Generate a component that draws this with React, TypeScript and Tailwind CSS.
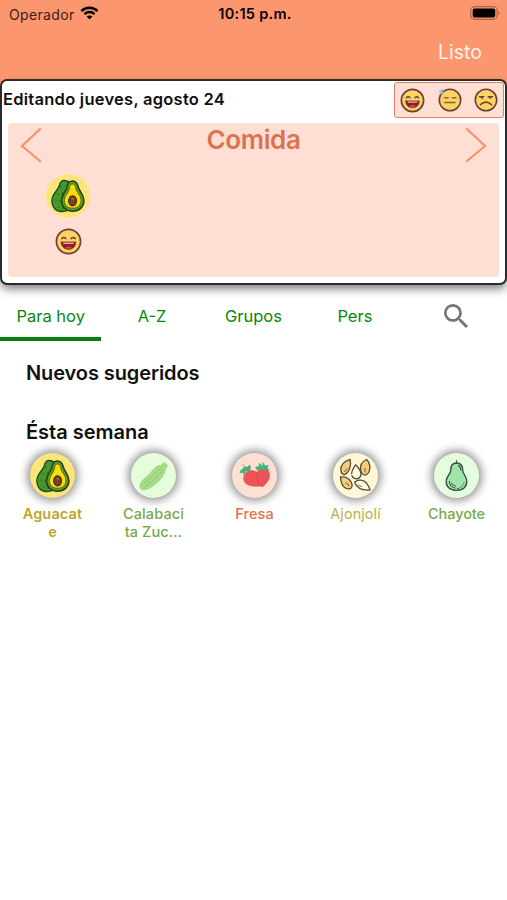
import React, { useState } from 'react'

type Mood = 'happy' | 'neutral' | 'sad'

const Face: React.FC<{ mood: Mood; className?: string }> = ({ mood, className }) => {
  return (
    <svg viewBox="0 0 26 26" className={className} fill="none" strokeLinecap="round">
      <circle cx="13" cy="13" r="11.6" fill="#fdd264" stroke="#6b4136" strokeWidth="1.7" />
      {mood === 'happy' && (
        <>
          <path d="M6.6 10.2q1.9-2.2 3.8 0M15.6 10.2q1.9-2.2 3.8 0" stroke="#6b4136" strokeWidth="1.5" />
          <path d="M6 13.5h14c0 4.3-3 7-7 7s-7-2.7-7-7z" fill="#8f1f22" stroke="#6b302c" strokeWidth=".8" />
          <path d="M8 14.1h10v1.1H8z" fill="#f5d5c6" />
          <path d="M9.6 19q3.4-2.5 6.8 0-3.4 2-6.8 0z" fill="#e8403f" />
        </>
      )}
      {mood === 'neutral' && (
        <>
          <path d="M7 10.5h4M15.5 10.5h4M7.5 15.8h11" stroke="#8a623c" strokeWidth="1.6" />
          <path d="M2 3.5l3.2 1.6M4.300 2l.4 4M2.300 6.200l2.400-1" stroke="#b3a6e4" strokeWidth="1.800" />
        </>
      )}
      {mood === 'sad' && (
        <>
          <path d="M6 9.600h4.600M15.400 9.600H20M7 18q6-5.400 12 0" stroke="#6b4136" strokeWidth="1.6" />
          <path d="M8.6 10v1.3M17.4 10v1.3" stroke="#6b4136" strokeWidth="1.5" />
        </>
      )}
    </svg>
  )
}

const Avocado: React.FC = () => (
  <svg viewBox="0 0 34 34" className="size-[34px]" strokeLinejoin="round">
    <path
      d="M13 1.5c-3 0-4 2.2-4.6 5C7.6 10.5 3 13 1.4 18.5c-2 7 1.800 13.800 9.100 14 4 .1 8-1 9.500-4V5c-1.600-2-4-3.500-7-3.500z"
      fill="#43992b"
      stroke="#21491d"
      strokeWidth="1.3"
    />
    <path d="M10 8l.1.1M7 15l.1.1M11 14l.1.1M5 21l.1.1M9 22l.1.1M8 28l.1.1M12 29l.1.1" stroke="#21491d" strokeWidth="1.1" strokeLinecap="round" />
    <path
      d="M21.500 2c-3.300 0-5 2.500-5.500 6-.6 4-5 7-5.500 13-.5 6.500 4.500 11.200 11.200 11.200 6.600 0 11.400-4.600 11.200-11-.2-6-4.600-9-5.600-13.200-.8-3.500-2.500-6-5.800-6z"
      fill="#559c2b"
      stroke="#2c3b18"
      strokeWidth="1.5"
    />
    <path
      d="M21.500 5c-2 0-2.800 2-3.200 5-.6 4.200-4.900 6.500-4.900 11.500 0 5 3.600 7.700 8.300 7.700s8.300-3 8.300-8c0-5-4.300-7.300-5.200-11.500-.7-3-1.300-4.700-3.300-4.700z"
      fill="#ffdc05"
      stroke="#526416"
      strokeWidth=".8"
    />
    <ellipse cx="21.6" cy="21.8" rx="3.900" ry="5" fill="#754123" stroke="#3f2a14" strokeWidth="1.2" />
    <path d="M20.500 19.500q1.600-.6 2 1.500" fill="none" stroke="#b77a4b" strokeWidth="1.1" />
  </svg>
)

const Zucchini: React.FC = () => (
  <svg viewBox="0 0 34 34" className="size-[32px]" fill="none" strokeLinecap="round">
    <path
      d="M25.500 5.500l1.800-2.800 3.700 2.600-.5 2.700-2 .5c1.400 3-1 7.500-4.800 12C18.500 26.500 10 32.500 5 31.500c-4-.8-3.500-5.500-.8-9C7.500 18 10.500 17.500 14 13c3-3.900 6.500-8 11.500-7.500z"
      fill="#a5dc88"
      stroke="#8fcb75"
      strokeWidth=".7"
    />
    <path d="M25 8.500C18 11 16 19 6 24.500M26.500 11C21 17 15.500 24 6.500 28.500" stroke="#88c56e" strokeWidth=".8" strokeDasharray="5 1.5" />
    <path d="M22 8.500q-4 3-7 7" stroke="#b5e39a" strokeWidth=".9" />
  </svg>
)

const Strawberry: React.FC = () => (
  <svg viewBox="0 0 34 34" className="size-[34px]">
    <path d="M10 12c4-1.500 7 0 9 1 3-5 11-5 12.500.5 1.500 5-1.500 10.500-6.500 14-1 .8-2 .6-3-.3-5.500 1-13 .3-16-4.700C4 18.500 6.500 13.500 10 12z" fill="#eb5354" />
    <path d="M19 12.500q-1.500 8 3 14.500" fill="none" stroke="#d64549" strokeWidth=".7" />
    <path d="M2.500 11.500l3-2.500-.5-2.500 4 1.500 3-2.500 1 4-1.500 2.500-4 .5-1.500 4-1.500-3-3 1zM17 8l4-1-.5-3 3.500 2 1.500-2.500 1.500 3 3.500-.5-1 3 2 1.500-4.500 1-4-1.500-4 1.500z" fill="#42b17c" />
    <path d="M6 8.500l-1-3M24 7V3" stroke="#94d9a8" strokeWidth="1.3" strokeLinecap="round" />
    <path d="M11 16l.1.6M16 18l.1.6M12 22l.1.6M24 14l.1.6M27 18l.1.6M23 21l.1.6" stroke="#f06b68" strokeWidth=".8" strokeLinecap="round" />
  </svg>
)

const Sesame: React.FC = () => (
  <svg viewBox="0 0 36 36" className="size-[35px]" fill="none" stroke="#514c39" strokeWidth="1.3" strokeLinecap="round" strokeLinejoin="round">
    <path d="M12.500 1.500C6 3.500 2.500 8 3 13q.3 3.500 3.300 4.200C11.500 15.500 14 8 12.500 1.500z" fill="#fbcb7c" />
    <path d="M9.500 11Q8.500 13 6.500 14" strokeWidth=".9" />
    <path d="M29.500 1.500C24 4 22 8.500 23.500 13.500q1.200 4 4.200 4 3.500-.7 4.600-4.500c1.300-4.500-.3-8.500-2.800-11.500z" fill="#fbcb7c" />
    <path d="M27.800 10.500q-.6 2 .2 4" strokeWidth=".9" />
    <path d="M18 7c-1.800 3-4 5.500-4 9 0 3 1.500 5 4.500 5.500 3.500 0 5.500-2.500 5-6-.6-3.500-3-6-5.500-8.500z" fill="#fffbe0" strokeDasharray="10 2 25 2" />
    <path d="M2.500 19.500c4.500-.5 9 1.500 11.200 5.500 1.500 3.500.8 6-1.800 6.800-6.500.2-8.900-6-9.400-12.300z" fill="#fbcb7c" />
    <path d="M8 25.500q2.600.8 3.300 3" strokeWidth=".9" />
    <path d="M17 25c4-3.500 9.500-2.500 12.500 1 1.500 2 3 4.500 3.500 7-7 .5-13.500-1.500-16-8z" fill="#fffbe0" />
    <path d="M20.500 27.500q2 1.500 4 2" strokeWidth=".8" />
  </svg>
)

const ChayotePear: React.FC = () => (
  <svg viewBox="0 0 24 34" className="h-[33px] w-[23px]" fill="none" strokeLinecap="round" strokeLinejoin="round">
    <path
      d="M12 4C7.500 4 6 7.500 6 11.500c0 4-4.200 5.500-4.700 11C.8 28.500 5 32.500 12 32.500s11.200-4 10.700-10c-.5-5.500-4.200-7-4.200-11C18.500 7.500 16.500 4 12 4z"
      fill="#a0e5aa"
      stroke="#345345"
      strokeWidth="1.4"
    />
    <path d="M12 4.500V1.300M14 6.500q3 2 2.500 5M4.500 23q.5 6 6 7M13 30.500h1M7 25q1 2.500 4 3" stroke="#345345" strokeWidth="1.1" />
    <path d="M20 24q-1 4.500-5 6" stroke="#5eaf7c" strokeWidth="1.1" />
  </svg>
)

const foods = [
  { name: 'Aguacate', lines: ['Aguacat', 'e'], icon: <Avocado />, bg: 'bg-[#fbe57b]', text: 'font-semibold tracking-[0.15px] text-[#c0a52d]' },
  { name: 'Calabacita Zucchini', lines: ['Calabaci', 'ta Zuc...'], icon: <Zucchini />, bg: 'bg-[#e6fddd]', text: 'font-medium tracking-[0.1px] text-[#75a94e]' },
  { name: 'Fresa', lines: ['Fresa'], icon: <Strawberry />, bg: 'bg-[#fedfd3]', text: 'font-medium tracking-[0.1px] text-[#e4704b]' },
  { name: 'Ajonjolí', lines: ['Ajonjolí'], icon: <Sesame />, bg: 'bg-[#fff7d5]', text: 'font-normal tracking-[0.05px] text-[#c2ad45]' },
  { name: 'Chayote', lines: ['Chayote'], icon: <ChayotePear />, bg: 'bg-[#e6fddd]', text: 'font-medium tracking-[-0.05px] text-[#75a94e]' },
]

const StatusBar: React.FC = () => (
  <div className="grid h-7 grid-cols-3 items-center pl-[9px] pr-[6px] text-black">
    <div className="flex items-center gap-[5px] text-[14px] tracking-[0.35px] text-[#3a2018]">
      <span>Operador</span>
      <svg viewBox="0 0 20 15" className="mb-[3px] h-[14px] w-[19px]" fill="none" stroke="#000" strokeWidth="2.7">
        <path d="M1.300 5.400C6.200.6 13.800.6 18.700 5.400M4.600 8.700c3.100-2.900 7.700-2.900 10.800 0" />
        <path d="M6.900 11.200c1.800-1.500 4.400-1.500 6.200 0L10 14.500z" fill="#000" stroke="none" />
      </svg>
    </div>
    <span className="whitespace-nowrap text-center text-[14.5px] font-semibold tracking-[0.3px]">10:15 p.m.</span>
    <svg viewBox="0 0 31 14" className="mb-[2px] h-[14px] w-[31px] justify-self-end">
      <rect x=".7" y=".7" width="26.5" height="12.6" rx="3.8" fill="none" stroke="#a9654b" strokeWidth="1.2" />
      <rect x="2.7" y="2.6" width="22.5" height="8.8" rx="2" fill="#000" />
      <path d="M28.500 4.800q2.300 2.200 0 4.400z" fill="#a9654b" />
    </svg>
  </div>
)

const MealCard: React.FC = () => (
  <section className="relative h-[206px] rounded-[7px] border-2 border-[#2c2b2b] bg-white shadow-[0_5px_10px_-1px_rgba(0,0,0,0.5)]">
    <div className="flex h-[42px] items-start justify-between pl-px pr-px">
      <h2 className="mt-[6px] whitespace-nowrap text-[16.5px] leading-6 font-semibold tracking-[0.25px]">
        Editando jueves, agosto 24
      </h2>
      <div className="mt-px flex h-[36px] w-[110px] items-center justify-between rounded-[3px] border border-[#e18068] bg-[#ffdfd4] px-[5px]">
        <Face mood="happy" className="size-[25px]" />
        <Face mood="neutral" className="size-[24px]" />
        <Face mood="sad" className="size-[24px]" />
      </div>
    </div>
    <div className="mx-[6px] h-[154px] rounded-[3px] bg-[#ffdfd3]">
      <div className="flex items-start justify-between px-[12px]">
        <svg viewBox="0 0 22 36" className="mt-[4px] h-[36px] w-[22px]" fill="none" stroke="#fa8e73" strokeWidth="2.2" strokeLinecap="round">
          <path d="M20 2L2 19l18 15" />
        </svg>
        <h1 className="text-[26px] leading-[33px] font-semibold tracking-[-0.4px] text-[#da744f]">Comida</h1>
        <svg viewBox="0 0 22 36" className="mt-[4px] h-[36px] w-[22px]" fill="none" stroke="#fa8e73" strokeWidth="2.2" strokeLinecap="round">
          <path d="M2 2l18 17L2 34" />
        </svg>
      </div>
      <div className="ml-[38px] mt-[11px] flex w-11 flex-col items-center gap-[10px]">
        <div className="flex size-11 items-center justify-center rounded-full bg-[#fbe57b]">
          <Avocado />
        </div>
        <Face mood="happy" className="size-[27px]" />
      </div>
    </div>
  </section>
)

const tabs = ['Para hoy', 'A-Z', 'Grupos', 'Pers']

const App: React.FC = () => {
  const [tab, setTab] = useState('Para hoy')

  return (
    <div className="min-h-[900px] w-full overflow-hidden bg-white font-['Inter','Liberation_Sans',sans-serif] text-[#111]">
      <header className="h-[79px] bg-[#fc966f]">
        <StatusBar />
        <div className="flex justify-end pr-[25px] pt-[10px]">
          <button className="text-[19.5px] leading-7 text-[#fff3eb]">Listo</button>
        </div>
      </header>
      <div className="bg-linear-to-b from-[#fc966f] from-[8px] to-white to-[8px]">
        <MealCard />
      </div>
      <nav className="grid h-[56px] grid-cols-5 text-[16.5px] text-[#088808]">
        {tabs.map((name) => (
          <button
            key={name}
            className={`flex items-center justify-center whitespace-nowrap border-b-4 pt-[10px] ${
              tab === name ? 'border-[#087f0a]' : 'border-transparent'
            }`}
            onClick={() => setTab(name)}
          >
            {name}
          </button>
        ))}
        <button className="flex items-center justify-center pt-[6px]" aria-label="Buscar">
          <svg viewBox="3 3 17.5 17.5" className="size-6" fill="#757575">
            <path d="M15.500 14h-.79l-.28-.27A6.471 6.471 0 0 0 16 9.500 6.500 6.500 0 1 0 9.500 16c1.610 0 3.090-.59 4.230-1.570l.27.28v.79l5 4.990L20.490 19l-4.990-5zm-6 0C7.010 14 5 11.990 5 9.500S7.010 5 9.500 5 14 7.010 14 9.500 11.990 14 9.500 14z" />
          </svg>
        </button>
      </nav>
      <main>
        <h3 className="ml-[26px] mt-[19px] text-[20px] leading-[26px] font-semibold tracking-[-0.1px]">Nuevos sugeridos</h3>
        <h3 className="ml-[26px] mt-[33px] text-[20px] leading-[26px] font-semibold">Ésta semana</h3>
        <div className="mt-[8px] grid grid-cols-5 pl-[2px]">
          {foods.map((food) => (
            <div key={food.name} className="flex flex-col items-center">
              <div className={`flex size-[45px] items-center justify-center rounded-full shadow-[0_0_9px_3px_rgba(0,0,0,0.42)] ${food.bg}`}>
                {food.icon}
              </div>
              <p className={`mt-[7px] text-center text-[14.5px] leading-[17.5px] ${food.text}`}>
                {food.lines.map((line) => (
                  <span key={line} className="block whitespace-nowrap">
                    {line}
                  </span>
                ))}
              </p>
            </div>
          ))}
        </div>
      </main>
    </div>
  )
}

export default App
